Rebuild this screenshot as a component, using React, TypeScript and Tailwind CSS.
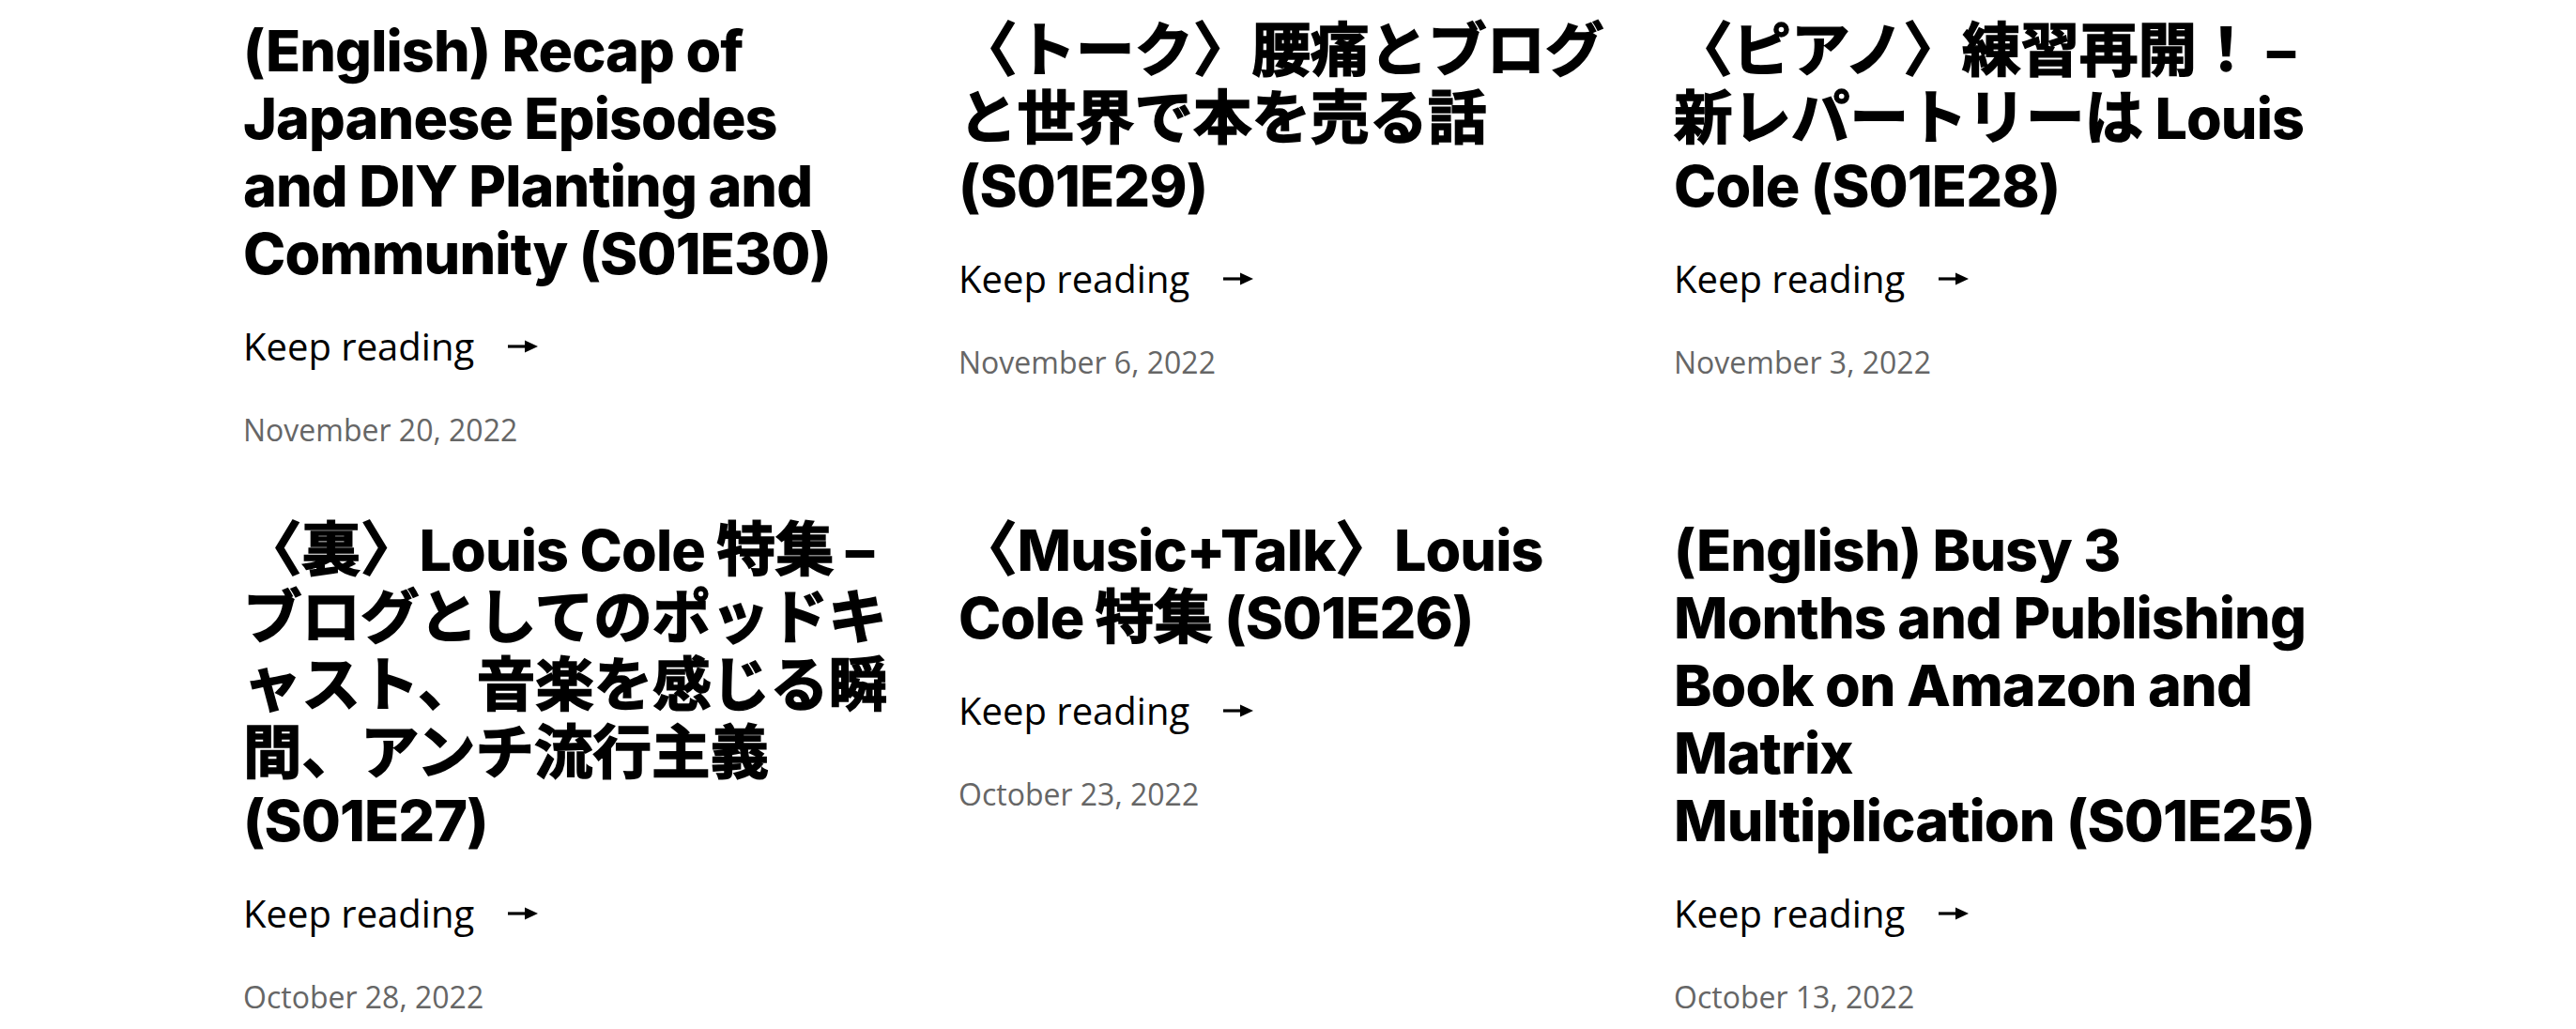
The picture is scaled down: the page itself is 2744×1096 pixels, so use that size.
import { Fragment } from 'react'

// titles are kept as the lines they wrap to in the design
const posts = [
  {
    lines: ['(English) Recap of', 'Japanese Episodes', 'and DIY Planting and', 'Community (S01E30)'],
    date: 'November 20, 2022',
  },
  {
    lines: ['〈トーク〉腰痛とブログ', 'と世界で本を売る話', '(S01E29)'],
    date: 'November 6, 2022',
  },
  {
    lines: ['〈ピアノ〉練習再開！ –', '新レパートリーは Louis', 'Cole (S01E28)'],
    date: 'November 3, 2022',
  },
  {
    lines: ['〈裏〉Louis Cole 特集 –', 'ブログとしてのポッドキ', 'ャスト、音楽を感じる瞬', '間、アンチ流行主義', '(S01E27)'],
    date: 'October 28, 2022',
  },
  {
    lines: ['〈Music+Talk〉Louis', 'Cole 特集 (S01E26)'],
    date: 'October 23, 2022',
  },
  {
    lines: ['(English) Busy 3', 'Months and Publishing', 'Book on Amazon and', 'Matrix', 'Multiplication (S01E25)'],
    date: 'October 13, 2022',
  },
]

const CJK = /([\u3000-\u30ff\u4e00-\u9fff\uff00-\uffef]+)/

// japanese runs are drawn a little larger and heavier
function TitleLine({ text }: { text: string }) {
  const parts = text.split(CJK)
  return (
    <>
      {parts.map((part, i) =>
        CJK.test(part) ? (
          <span key={i} className="text-[62.5px] leading-none font-bold tracking-normal [-webkit-text-stroke:1.6px_#000]">
            {part}
          </span>
        ) : (
          <Fragment key={i}>{part}</Fragment>
        )
      )}
    </>
  )
}

function Arrow() {
  return (
    <svg width="32" height="14" viewBox="0 0 32 14" className="ml-[36px] shrink-0" aria-hidden="true">
      <path d="M0 7H21" stroke="currentColor" strokeWidth="3.2" />
      <path d="M18 0.5L32 7L18 13.5Z" fill="currentColor" />
    </svg>
  )
}

function PostCard({ lines, date }: { lines: string[]; date: string }) {
  return (
    <article className="flex flex-col items-start">
      <h2 className="whitespace-nowrap font-['Inter','Noto_Sans_CJK_JP',sans-serif] text-[61px] leading-[72px] font-extrabold tracking-[-0.015em] text-black">
        {lines.map((line, i) => (
          <Fragment key={i}>
            {i > 0 && <br />}
            <TitleLine text={line} />
          </Fragment>
        ))}
      </h2>
      <a href="#" className="mt-[34px] flex items-center text-[40px] leading-[58px] text-black">
        Keep reading
        <Arrow />
      </a>
      <time className="mt-[37px] text-[32px] leading-[46px] text-[#666]">{date}</time>
    </article>
  )
}

export default function App() {
  return (
    <div className="min-h-screen w-full bg-white font-['Open_Sans','Noto_Sans_CJK_JP',sans-serif]">
      {/* post grid */}
      <div className="grid grid-cols-3 gap-x-[60px] gap-y-[69px] px-[259px] pt-[18px]">
        {posts.map((p) => (
          <PostCard key={p.date} lines={p.lines} date={p.date} />
        ))}
      </div>
    </div>
  )
}
